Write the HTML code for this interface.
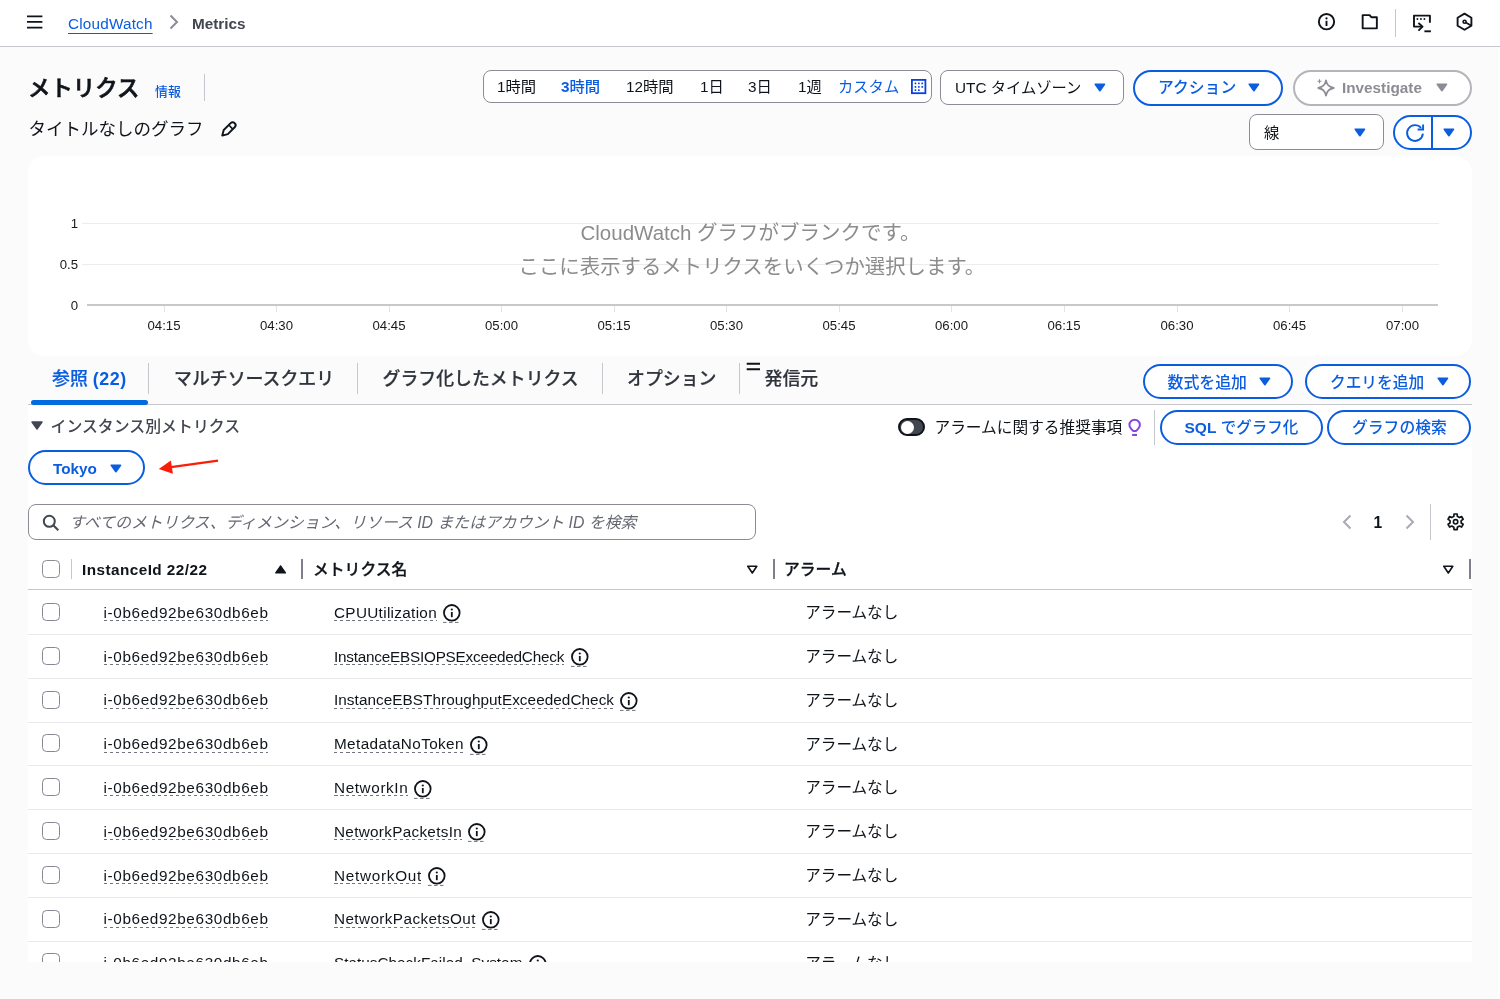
<!DOCTYPE html>
<html lang="ja">
<head>
<meta charset="utf-8">
<title>CloudWatch Metrics</title>
<style>
html,body{margin:0;padding:0}
body{will-change:transform;width:1500px;height:999px;overflow:hidden;position:relative;background:#fbfbfb;
 font-family:"Liberation Sans","Noto Sans CJK JP",sans-serif;color:#0f141a;font-size:15.3px}
.a{position:absolute}
.t{position:absolute;white-space:nowrap;line-height:20px}
.b{font-weight:bold}
.blue{color:#0b5de0}
svg{position:absolute;overflow:visible}
#hdr{left:0;top:0;width:1500px;height:46px;background:#fff;border-bottom:1px solid #c6c6cd}
#gpanel{left:28px;top:156px;width:1443.5px;height:199.5px;background:#fff;border-radius:16px}
#lpanel{left:28px;top:405px;width:1443.5px;height:557px;background:#fff}
.box{position:absolute;box-sizing:border-box;background:#fff;border:1px solid #8c8c94;border-radius:8px}
.pill{position:absolute;box-sizing:border-box;background:#fff;border:2px solid #0b5de0;border-radius:20px}
.vd{position:absolute;width:1px;background:#c6c6cd}
#tbl{position:absolute;left:28px;top:0;width:1443.5px;height:962px;overflow:hidden;pointer-events:none}
.row{position:absolute;left:0;width:1443.5px;height:43.8px;box-sizing:border-box;border-bottom:1px solid #e9e9ed}
.row span{position:absolute;white-space:nowrap;line-height:20px}
.cb{left:14px;top:11.8px;width:18px;height:18px;box-sizing:border-box;border:1.2px solid #858792;border-radius:4.5px;background:#fff}
.u{height:18.3px;top:11.7px;font-size:15.3px;overflow:hidden;background:repeating-linear-gradient(90deg,#70737c 0 3.5px,transparent 3.5px 6px) left bottom/100% 1px no-repeat}
.iid{left:75.5px;letter-spacing:.632px;width:164.5px}
.mn{left:306px}
.row .inf{top:13.2px}
.al{left:777.2px;top:12px;font-size:15.6px}
#botmask{position:absolute;left:0;top:962px;width:1500px;height:37px;background:#fbfbfb}
.ax{font-size:13.2px;color:#1a1a1a;line-height:20px}
.xl{top:315.5px;transform:translateX(-50%)}
.gm{font-size:20.5px;line-height:28px;color:#8c8c8c}
.tab{top:367px;font-size:17.9px;line-height:24px;color:#30343d}
.tab.m,.tab .m{-webkit-text-stroke:.2px}
.tab.blue{color:#0b5de0}
.m{font-weight:500}
.tk{top:306px;width:1px;height:5.5px;background:#e3e3e3}
#rstrip{position:absolute;left:1497.9px;top:47px;width:2.1px;height:952px;background:#fff}

</style>
</head>
<body>
<!-- ===== top bar ===== -->
<div id="hdr" class="a"></div>
<svg id="burger" style="left:27px;top:14px" width="17" height="16" viewBox="0 0 17 16"><path d="M0 2.300H15.400M0 7.900H15.400M0 13.500H15.400" stroke="#0f141a" stroke-width="1.750" fill="none"/></svg>
<span class="t blue" id="bc1" style="left:68px;top:14.2px;font-size:15.3px;letter-spacing:.19px;text-decoration:underline;text-underline-offset:4px;text-decoration-thickness:1px">CloudWatch</span>
<svg id="bcsep" style="left:169px;top:14px" width="10" height="16" viewBox="0 0 10 16"><path d="M1.5 1.5L8 8L1.5 14.5" stroke="#8c8c94" stroke-width="2" fill="none"/></svg>
<span class="t b" id="bc2" style="left:192px;top:14px;font-size:15.3px;color:#424650">Metrics</span>

<!-- top-right icons -->
<svg id="topicons" style="left:0;top:0" width="1500" height="46" viewBox="0 0 1500 46" fill="none" stroke="#0f141a" stroke-width="1.9">
<circle cx="1326.5" cy="21.7" r="7.65"/><path d="M1326.5 20.8V26"/><circle cx="1326.5" cy="18.4" r="1.1" fill="#0f141a" stroke="none"/>
<path d="M1362.65 15.15H1369.6L1371.3 17.2H1376.85V28.35H1362.65Z" stroke-linejoin="round"/>
<path d="M1429.9 22.8V15.6H1414V26.6H1422" stroke-linejoin="round"/><path d="M1418.4 23L1422.6 26.6L1418.4 30.6" stroke-linejoin="round"/><path d="M1424.4 31.3H1430.9"/>
<circle cx="1417.4" cy="19" r=".95" fill="#0f141a" stroke="none"/><circle cx="1420.9" cy="19" r=".95" fill="#0f141a" stroke="none"/><circle cx="1424.4" cy="19" r=".95" fill="#0f141a" stroke="none"/>
<path d="M1464.5 13.6L1471.4 17.7V25.7L1464.5 29.8L1457.6 25.7V17.7Z" stroke-linejoin="round"/><circle cx="1464.6" cy="21.8" r="1.5" stroke-width="1.6"/><path d="M1465.8 22.6L1471 25.5" stroke-width="1.7"/>
</svg>
<div class="vd" style="left:1395px;top:9px;height:28px;width:1.2px"></div>

<!-- ===== title row ===== -->
<span class="t m" id="h1" style="left:28px;top:73.5px;font-size:22.4px;line-height:30px;-webkit-text-stroke:.65px">メトリクス</span>
<span class="t m blue" id="info" style="left:155px;top:81.5px;font-size:12.9px">情報</span>
<div class="vd" style="left:204px;top:74px;height:27px"></div>
<span class="t" id="sub" style="left:28.5px;top:116.5px;font-size:17.5px;line-height:24px;color:#0f141a">タイトルなしのグラフ</span>
<svg id="pencil" style="left:220px;top:119.5px" width="18" height="18" viewBox="0 0 18 18"><g transform="translate(8.47 9.38) rotate(45)" fill="none" stroke="#0f141a" stroke-width="1.9" stroke-linejoin="round"><path d="M-2.900 -5.900A2.900 2.900 0 0 1 2.900 -5.900V3.800L0 8.800L-2.900 3.800Z"/><path d="M-2.900 -3.300H2.900" stroke-width="1.600"/></g></svg>

<!-- time range -->
<div class="box" id="trbox" style="left:483px;top:69.5px;width:449px;height:33.500px"></div>
<span class="t" style="left:497px;top:77px">1時間</span>
<span class="t blue" style="left:561px;top:77px"><b>3</b><span class="m">時間</span></span>
<span class="t" style="left:626px;top:77px">12時間</span>
<span class="t" style="left:700px;top:77px">1日</span>
<span class="t" style="left:748px;top:77px">3日</span>
<span class="t" style="left:798px;top:77px">1週</span>
<span class="t blue" style="left:838px;top:77px">カスタム</span>
<svg id="cal" style="left:911.2px;top:78.7px" width="15.3" height="15.1" viewBox="0 0 15.3 15.1"><rect x=".9" y=".9" width="13.5" height="13.3" fill="none" stroke="#0a3fe0" stroke-width="1.8"/><rect x="3.6" y="3.6" width="1.7" height="1.7" rx=".5" fill="#0a3fe0"/><rect x="7.0" y="3.6" width="1.7" height="1.7" rx=".5" fill="#0a3fe0"/><rect x="10.4" y="3.6" width="1.7" height="1.7" rx=".5" fill="#0a3fe0"/><rect x="3.6" y="7.0" width="1.7" height="1.7" rx=".5" fill="#0a3fe0"/><rect x="7.0" y="7.0" width="1.7" height="1.7" rx=".5" fill="#0a3fe0"/><rect x="10.4" y="7.0" width="1.7" height="1.7" rx=".5" fill="#0a3fe0"/><rect x="3.6" y="10.3" width="1.7" height="1.7" rx=".5" fill="#0a3fe0"/><rect x="7.0" y="10.3" width="1.7" height="1.7" rx=".5" fill="#0a3fe0"/></svg>

<!-- UTC select -->
<div class="box" style="left:940px;top:69.7px;width:184px;height:35.800px"></div>
<span class="t" style="left:955px;top:78px">UTC タイムゾーン</span>
<svg class="tri" style="left:1094px;top:83px" width="12" height="9" viewBox="0 0 12 9"><path d="M1.3 1.2H10.5L5.9 7.7Z" fill="#0b5de0" stroke="#0b5de0" stroke-width="1.6" stroke-linejoin="round"/></svg>

<!-- Actions -->
<div class="pill" style="left:1133px;top:70px;width:149.500px;height:35.500px"></div>
<span class="t m blue" style="left:1158px;top:78px;font-size:15.8px">アクション</span>
<svg class="tri" style="left:1248px;top:83px" width="12" height="9" viewBox="0 0 12 9"><path d="M1.3 1.2H10.5L5.9 7.7Z" fill="#0b5de0" stroke="#0b5de0" stroke-width="1.6" stroke-linejoin="round"/></svg>

<!-- Investigate -->
<div class="pill" style="left:1293px;top:70px;width:178.500px;height:35.500px;border-color:#b4b4bb"></div>
<svg id="spark" style="left:1316px;top:78px" width="19" height="19" viewBox="0 0 19 19"><path d="M10 2.3C10.9 6.9 12.6 8.9 17.7 10C12.6 11.1 10.9 13.1 10 17.700C9.1 13.1 7.4 11.1 2.300 10C7.4 8.9 9.1 6.9 10 2.300Z" fill="none" stroke="#8c8c94" stroke-width="1.800" stroke-linejoin="round"/><path d="M3.5 1.2V5.200M1.5 3.200H5.500" stroke="#8c8c94" stroke-width="1.100"/></svg>
<span class="t b" style="left:1342px;top:78px;color:#8c8c94">Investigate</span>
<svg class="tri" style="left:1436px;top:83px" width="12" height="9" viewBox="0 0 12 9"><path d="M1.3 1.2H10.5L5.9 7.7Z" fill="#8c8c94" stroke="#8c8c94" stroke-width="1.6" stroke-linejoin="round"/></svg>

<!-- line select -->
<div class="box" style="left:1249px;top:114.300px;width:134.500px;height:36px"></div>
<span class="t" style="left:1264px;top:122.800px">線</span>
<svg class="tri" style="left:1354px;top:128px" width="12" height="9" viewBox="0 0 12 9"><path d="M1.3 1.2H10.5L5.9 7.7Z" fill="#0b5de0" stroke="#0b5de0" stroke-width="1.6" stroke-linejoin="round"/></svg>

<!-- refresh split -->
<div class="pill" style="left:1393px;top:114.500px;width:78.500px;height:35.500px"></div>
<div class="a" style="left:1431px;top:115px;width:2px;height:35px;background:#0b5de0"></div>
<svg id="refresh" style="left:1405.1px;top:122.5px" width="20" height="20" viewBox="0 0 20 20"><path d="M17.87 10.7A7.9 7.9 0 1 1 16.05 4.92" fill="none" stroke="#0b5de0" stroke-width="1.9"/><path d="M18.1 1.5V6.5H12.6" fill="none" stroke="#0b5de0" stroke-width="1.9"/></svg>
<svg class="tri" style="left:1443px;top:128px" width="12" height="9" viewBox="0 0 12 9"><path d="M1.3 1.2H10.5L5.9 7.7Z" fill="#0b5de0" stroke="#0b5de0" stroke-width="1.6" stroke-linejoin="round"/></svg>

<!-- ===== graph panel ===== -->
<div id="gpanel" class="a"></div>
<div class="a" style="left:82px;top:223px;width:1356.500px;height:1px;background:#ececec"></div>
<div class="a" style="left:82px;top:264px;width:1356.500px;height:1px;background:#ececec"></div>
<div class="a" style="left:87px;top:304.2px;width:1351.2px;height:2px;background:#c8c8c8"></div>
<div class="a tk" style="left:163.5px"></div><div class="a tk" style="left:276.0px"></div><div class="a tk" style="left:388.5px"></div><div class="a tk" style="left:501.0px"></div><div class="a tk" style="left:613.5px"></div><div class="a tk" style="left:726.0px"></div><div class="a tk" style="left:838.5px"></div><div class="a tk" style="left:951.0px"></div><div class="a tk" style="left:1063.5px"></div><div class="a tk" style="left:1176.5px"></div><div class="a tk" style="left:1289.0px"></div><div class="a tk" style="left:1402.0px"></div>
<span class="t ax" style="left:40px;width:38px;text-align:right;top:213.500px">1</span>
<span class="t ax" style="left:40px;width:38px;text-align:right;top:254.500px">0.5</span>
<span class="t ax" style="left:40px;width:38px;text-align:right;top:295.500px">0</span>
<span class="t ax xl" style="left:164px">04:15</span>
<span class="t ax xl" style="left:276.500px">04:30</span>
<span class="t ax xl" style="left:389px">04:45</span>
<span class="t ax xl" style="left:501.500px">05:00</span>
<span class="t ax xl" style="left:614px">05:15</span>
<span class="t ax xl" style="left:726.500px">05:30</span>
<span class="t ax xl" style="left:839px">05:45</span>
<span class="t ax xl" style="left:951.500px">06:00</span>
<span class="t ax xl" style="left:1064px">06:15</span>
<span class="t ax xl" style="left:1177px">06:30</span>
<span class="t ax xl" style="left:1289.500px">06:45</span>
<span class="t ax xl" style="left:1402.500px">07:00</span>
<span class="t gm" id="gm1" style="left:580.5px;top:219px">CloudWatch グラフがブランクです。</span>
<span class="t gm" id="gm2" style="left:518.5px;top:252.7px;font-size:20.42px">ここに表示するメトリクスをいくつか選択します。</span>

<!-- ===== tabs ===== -->
<div class="a" style="left:28px;top:404px;width:1443.500px;height:1px;background:#c6c6cd"></div>
<div id="lpanel" class="a"></div>
<span class="t blue tab" style="left:52px"><span class="m">参照</span> <b style="letter-spacing:.5px">(22)</b></span>
<div class="a" style="left:30.500px;top:400px;width:117.500px;height:4.500px;border-radius:2.500px;background:#006ce0"></div>
<div class="vd" style="left:148px;top:362.500px;height:31px"></div>
<span class="t m tab" style="left:174px">マルチソースクエリ</span>
<div class="vd" style="left:357px;top:362.500px;height:31px"></div>
<span class="t m tab" style="left:382.5px">グラフ化したメトリクス</span>
<div class="vd" style="left:602px;top:362.500px;height:31px"></div>
<span class="t m tab" style="left:627px">オプション</span>
<div class="vd" style="left:739px;top:362.500px;height:31px"></div>
<svg style="left:746px;top:361px" width="16" height="10" viewBox="0 0 16 10"><path d="M.7 2.700H14M.7 8.300H14" stroke="#0f141a" stroke-width="1.900"/></svg>
<span class="t m tab" style="left:764.5px">発信元</span>

<div class="pill" style="left:1142.8px;top:364.2px;width:150.2px;height:34.7px"></div>
<span class="t m blue" style="left:1167.5px;top:372.5px;font-size:15.9px">数式を追加</span>
<svg class="tri" style="left:1258.9px;top:377.3px" width="12" height="9" viewBox="0 0 12 9"><path d="M1.3 1.2H10.5L5.9 7.7Z" fill="#0b5de0" stroke="#0b5de0" stroke-width="1.6" stroke-linejoin="round"/></svg>
<div class="pill" style="left:1305px;top:364.2px;width:166px;height:34.700px"></div>
<span class="t m blue" style="left:1330px;top:372.5px;font-size:15.7px">クエリを追加</span>
<svg class="tri" style="left:1436.6px;top:377.3px" width="12" height="9" viewBox="0 0 12 9"><path d="M1.3 1.2H10.5L5.9 7.7Z" fill="#0b5de0" stroke="#0b5de0" stroke-width="1.6" stroke-linejoin="round"/></svg>

<!-- ===== controls row ===== -->
<svg style="left:31px;top:421px" width="12" height="9" viewBox="0 0 12 9"><path d="M1 1H11L6 8Z" fill="#424650" stroke="#424650" stroke-width="1.400" stroke-linejoin="round"/></svg>
<span class="t" id="sect" style="left:50.5px;top:416.5px;color:#424650;font-weight:500;font-size:15.9px">インスタンス別メトリクス</span>

<div class="a" id="toggle" style="left:897.8px;top:418.4px;width:27.4px;height:18px;border-radius:9px;background:#424650;box-sizing:border-box;border:2px solid #0f141a"></div>
<div class="a" style="left:900.6px;top:420.8px;width:13.4px;height:13.4px;border-radius:7px;background:#fff"></div>
<span class="t" style="left:934.5px;top:418px;font-size:15.7px">アラームに関する推奨事項</span>
<svg id="bulb" style="left:1127px;top:417px" width="16" height="20" viewBox="0 0 16 20"><path d="M6.1 13.900L3.970 11.580A5.200 5.200 0 1 1 11.330 11.580L9.200 13.900Z" fill="none" stroke="#8347d9" stroke-width="2" stroke-linejoin="round"/><rect x="5.100" y="16.900" width="4.900" height="2.100" fill="#8347d9"/></svg>
<div class="vd" style="left:1154px;top:410px;height:34.500px"></div>
<div class="pill" style="left:1159.500px;top:410px;width:163px;height:35px"></div>
<span class="t blue" style="left:1184.5px;top:418px;font-size:15.5px"><b>SQL</b> <span class="m">でグラフ化</span></span>
<div class="pill" style="left:1327.2px;top:410px;width:143.800px;height:35px"></div>
<span class="t m blue" style="left:1352px;top:418px;font-size:15.8px">グラフの検索</span>

<!-- Tokyo -->
<div class="pill" style="left:28px;top:450.4px;width:117.300px;height:35px"></div>
<span class="t b blue" style="left:53px;top:459px">Tokyo</span>
<svg class="tri" style="left:110px;top:463.500px" width="12" height="9" viewBox="0 0 12 9"><path d="M1.3 1.2H10.5L5.9 7.7Z" fill="#0b5de0" stroke="#0b5de0" stroke-width="1.6" stroke-linejoin="round"/></svg>
<svg id="arrow" style="left:0;top:0" width="300" height="500" viewBox="0 0 300 500"><path d="M218 460.600L171 467.200" stroke="#fb1d08" stroke-width="2.300" fill="none"/><path d="M158.800 468.900L170.900 460.400L172.900 473.700Z" fill="#fb1d08"/></svg>

<!-- search -->
<div class="box" style="left:28px;top:504px;width:727.500px;height:36px"></div>
<svg id="mag" style="left:42px;top:514px" width="18" height="18" viewBox="0 0 18 18"><circle cx="7.300" cy="7.300" r="5.500" fill="none" stroke="#424650" stroke-width="2"/><path d="M11.300 11.300L16.300 16.300" stroke="#424650" stroke-width="2"/></svg>
<span class="t" id="ph" style="left:69.3px;top:513px;font-style:italic;color:#656871;font-size:15.85px">すべてのメトリクス、ディメンション、リソース ID またはアカウント ID を検索</span>

<!-- pagination -->
<svg style="left:1342px;top:514px" width="10" height="16" viewBox="0 0 10 16"><path d="M8.500 1.500L2 8L8.500 14.500" stroke="#a8aab4" stroke-width="2" fill="none"/></svg>
<span class="t b" style="left:1373.500px;top:512.500px;font-size:15.6px">1</span>
<svg style="left:1405px;top:514px" width="10" height="16" viewBox="0 0 10 16"><path d="M1.500 1.500L8 8L1.500 14.500" stroke="#a8aab4" stroke-width="2" fill="none"/></svg>
<div class="vd" style="left:1430px;top:504px;height:35.5px"></div>
<svg id="gear" style="left:1446px;top:512px" width="19" height="20" viewBox="0 0 19 20"><circle cx="9.6" cy="9.8" r="2.2" fill="none" stroke="#0f141a" stroke-width="1.6"/><path d="M11.36 4.38L11.18 2.01L8.02 2.01L7.84 4.38L5.79 5.56L3.65 4.53L2.06 7.28L4.02 8.61L4.02 10.99L2.06 12.32L3.65 15.07L5.79 14.04L7.84 15.22L8.02 17.59L11.18 17.59L11.36 15.22L13.41 14.04L15.55 15.07L17.14 12.32L15.18 10.99L15.18 8.61L17.14 7.28L15.55 4.53L13.41 5.56Z" fill="none" stroke="#0f141a" stroke-width="1.7" stroke-linejoin="round"/></svg>

<!-- ===== table header ===== -->
<div class="a cbh" style="left:42px;top:559.500px;width:18px;height:18px;box-sizing:border-box;border:1px solid #8c8c94;border-radius:4.500px;background:#fff"></div>
<div class="vd" style="left:71px;top:559px;height:19.500px"></div>
<span class="t b" id="th1" style="left:82px;top:559.5px;font-size:15.3px;letter-spacing:.45px">InstanceId 22/22</span>
<svg style="left:274px;top:563.6px" width="14" height="10" viewBox="0 0 14 10"><path d="M1.7 8.9H11.500L6.600 1.800Z" fill="#0f141a" stroke="#0f141a" stroke-width="1.200" stroke-linejoin="round"/></svg>
<div class="vd" style="left:300.900px;top:559px;height:19.800px;width:2px;background:#7d7f8c"></div>
<span class="t m" id="th2" style="left:313px;top:559.5px;font-size:15.8px;-webkit-text-stroke:.3px">メトリクス名</span>
<svg style="left:746px;top:564.500px" width="13" height="10" viewBox="0 0 13 10"><path d="M1.800 1.200H10.800L6.300 8Z" fill="none" stroke="#0f141a" stroke-width="1.600" stroke-linejoin="round"/></svg>
<div class="vd" style="left:772.600px;top:559px;height:19.800px;width:2px;background:#7d7f8c"></div>
<span class="t m" id="th3" style="left:784px;top:559.5px;font-size:15.8px;-webkit-text-stroke:.3px">アラーム</span>
<svg style="left:1442.300px;top:564.500px" width="13" height="10" viewBox="0 0 13 10"><path d="M1.800 1.200H10.800L6.300 8Z" fill="none" stroke="#0f141a" stroke-width="1.600" stroke-linejoin="round"/></svg>
<div class="vd" style="left:1469px;top:559px;height:19.800px;width:2px;background:#7d7f8c"></div>
<div class="a" style="left:28px;top:588.500px;width:1443.500px;height:1.500px;background:#c6c6cd"></div>

<div id="tbl">
<div class="row" style="top:591.20px"><span class="cb"></span><span class="iid u">i-0b6ed92be630db6eb</span><span class="mn u" style="letter-spacing:0.315px;width:102.7px">CPUUtilization</span><svg class="inf" style="left:414.9px" width="18" height="19" viewBox="0 0 18 19"><circle cx="8.8" cy="8.85" r="7.85" fill="none" stroke="#0f141a" stroke-width="1.8"/><path d="M8.8 8V13.2" stroke="#0f141a" stroke-width="1.8"/><circle cx="8.8" cy="5.5" r="1.1" fill="#0f141a"/><path d="M0 18.4H17.6" stroke="#70737c" stroke-width="1" stroke-dasharray="3.5 2.5"/></svg><span class="al">アラームなし</span></div>
<div class="row" style="top:635.00px"><span class="cb"></span><span class="iid u">i-0b6ed92be630db6eb</span><span class="mn u" style="letter-spacing:-0.226px;width:230.3px">InstanceEBSIOPSExceededCheck</span><svg class="inf" style="left:542.5px" width="18" height="19" viewBox="0 0 18 19"><circle cx="8.8" cy="8.85" r="7.85" fill="none" stroke="#0f141a" stroke-width="1.8"/><path d="M8.8 8V13.2" stroke="#0f141a" stroke-width="1.8"/><circle cx="8.8" cy="5.5" r="1.1" fill="#0f141a"/><path d="M0 18.4H17.6" stroke="#70737c" stroke-width="1" stroke-dasharray="3.5 2.5"/></svg><span class="al">アラームなし</span></div>
<div class="row" style="top:678.80px"><span class="cb"></span><span class="iid u">i-0b6ed92be630db6eb</span><span class="mn u" style="letter-spacing:0.058px;width:280.0px">InstanceEBSThroughputExceededCheck</span><svg class="inf" style="left:592.2px" width="18" height="19" viewBox="0 0 18 19"><circle cx="8.8" cy="8.85" r="7.85" fill="none" stroke="#0f141a" stroke-width="1.8"/><path d="M8.8 8V13.2" stroke="#0f141a" stroke-width="1.8"/><circle cx="8.8" cy="5.5" r="1.1" fill="#0f141a"/><path d="M0 18.4H17.6" stroke="#70737c" stroke-width="1" stroke-dasharray="3.5 2.5"/></svg><span class="al">アラームなし</span></div>
<div class="row" style="top:722.60px"><span class="cb"></span><span class="iid u">i-0b6ed92be630db6eb</span><span class="mn u" style="letter-spacing:0.382px;width:129.5px">MetadataNoToken</span><svg class="inf" style="left:441.7px" width="18" height="19" viewBox="0 0 18 19"><circle cx="8.8" cy="8.85" r="7.85" fill="none" stroke="#0f141a" stroke-width="1.8"/><path d="M8.8 8V13.2" stroke="#0f141a" stroke-width="1.8"/><circle cx="8.8" cy="5.5" r="1.1" fill="#0f141a"/><path d="M0 18.4H17.6" stroke="#70737c" stroke-width="1" stroke-dasharray="3.5 2.5"/></svg><span class="al">アラームなし</span></div>
<div class="row" style="top:766.40px"><span class="cb"></span><span class="iid u">i-0b6ed92be630db6eb</span><span class="mn u" style="letter-spacing:0.605px;width:73.7px">NetworkIn</span><svg class="inf" style="left:385.9px" width="18" height="19" viewBox="0 0 18 19"><circle cx="8.8" cy="8.85" r="7.85" fill="none" stroke="#0f141a" stroke-width="1.8"/><path d="M8.8 8V13.2" stroke="#0f141a" stroke-width="1.8"/><circle cx="8.8" cy="5.5" r="1.1" fill="#0f141a"/><path d="M0 18.4H17.6" stroke="#70737c" stroke-width="1" stroke-dasharray="3.5 2.5"/></svg><span class="al">アラームなし</span></div>
<div class="row" style="top:810.20px"><span class="cb"></span><span class="iid u">i-0b6ed92be630db6eb</span><span class="mn u" style="letter-spacing:0.295px;width:127.7px">NetworkPacketsIn</span><svg class="inf" style="left:439.9px" width="18" height="19" viewBox="0 0 18 19"><circle cx="8.8" cy="8.85" r="7.85" fill="none" stroke="#0f141a" stroke-width="1.8"/><path d="M8.8 8V13.2" stroke="#0f141a" stroke-width="1.8"/><circle cx="8.8" cy="5.5" r="1.1" fill="#0f141a"/><path d="M0 18.4H17.6" stroke="#70737c" stroke-width="1" stroke-dasharray="3.5 2.5"/></svg><span class="al">アラームなし</span></div>
<div class="row" style="top:854.00px"><span class="cb"></span><span class="iid u">i-0b6ed92be630db6eb</span><span class="mn u" style="letter-spacing:0.726px;width:87.3px">NetworkOut</span><svg class="inf" style="left:399.5px" width="18" height="19" viewBox="0 0 18 19"><circle cx="8.8" cy="8.85" r="7.85" fill="none" stroke="#0f141a" stroke-width="1.8"/><path d="M8.8 8V13.2" stroke="#0f141a" stroke-width="1.8"/><circle cx="8.8" cy="5.5" r="1.1" fill="#0f141a"/><path d="M0 18.4H17.6" stroke="#70737c" stroke-width="1" stroke-dasharray="3.5 2.5"/></svg><span class="al">アラームなし</span></div>
<div class="row" style="top:897.80px"><span class="cb"></span><span class="iid u">i-0b6ed92be630db6eb</span><span class="mn u" style="letter-spacing:0.396px;width:141.5px">NetworkPacketsOut</span><svg class="inf" style="left:453.7px" width="18" height="19" viewBox="0 0 18 19"><circle cx="8.8" cy="8.85" r="7.85" fill="none" stroke="#0f141a" stroke-width="1.8"/><path d="M8.8 8V13.2" stroke="#0f141a" stroke-width="1.8"/><circle cx="8.8" cy="5.5" r="1.1" fill="#0f141a"/><path d="M0 18.4H17.6" stroke="#70737c" stroke-width="1" stroke-dasharray="3.5 2.5"/></svg><span class="al">アラームなし</span></div>
<div class="row" style="top:941.60px"><span class="cb"></span><span class="iid u">i-0b6ed92be630db6eb</span><span class="mn u" style="letter-spacing:0.021px;width:188.4px">StatusCheckFailed_System</span><svg class="inf" style="left:500.6px" width="18" height="19" viewBox="0 0 18 19"><circle cx="8.8" cy="8.85" r="7.85" fill="none" stroke="#0f141a" stroke-width="1.8"/><path d="M8.8 8V13.2" stroke="#0f141a" stroke-width="1.8"/><circle cx="8.8" cy="5.5" r="1.1" fill="#0f141a"/><path d="M0 18.4H17.6" stroke="#70737c" stroke-width="1" stroke-dasharray="3.5 2.5"/></svg><span class="al">アラームなし</span></div>
</div>
<div id="botmask"></div>
<div id="rstrip"></div>
</body>
</html>
